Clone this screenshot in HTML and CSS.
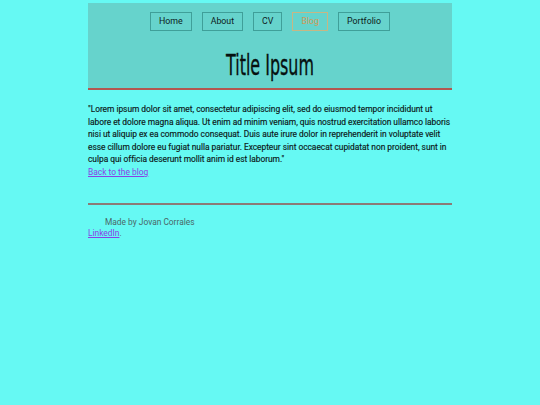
FILE: index.html
```html
<!DOCTYPE html>
<html>
<head>
<meta charset="utf-8">
<link rel="stylesheet" href="styles.css">
</head>
<body>
<div class="page">
  <header class="header">
    <nav class="nav">
      <a class="btn" href="#">Home</a>
      <a class="btn" href="#">About</a>
      <a class="btn" href="#">CV</a>
      <a class="btn active" href="#">Blog</a>
      <a class="btn" href="#">Portfolio</a>
    </nav>
    <h1 class="title">Title Ipsum</h1>
  </header>
  <main class="content">
    <p class="text">"Lorem ipsum dolor sit amet, consectetur adipiscing elit, sed do eiusmod tempor incididunt ut labore et dolore magna aliqua. Ut enim ad minim veniam, quis nostrud exercitation ullamco laboris nisi ut aliquip ex ea commodo consequat. Duis aute irure dolor in reprehenderit in voluptate velit esse cillum dolore eu fugiat nulla pariatur. Excepteur sint occaecat cupidatat non proident, sunt in culpa qui officia deserunt mollit anim id est laborum."</p>
    <a class="link" href="#">Back to the blog</a>
  </main>
  <footer class="footer">
    <p class="made">Made by Jovan Corrales</p>
    <p class="social"><a class="link" href="#">LinkedIn</a>.</p>
  </footer>
</div>
</body>
</html>
```
FILE: styles.css
```css
html, body {
  margin: 0;
  padding: 0;
  background: #66f9f3;
}
body {
  font-family: Roboto, "Noto Sans", sans-serif;
  color: #0d1a1a;
}
.page {
  width: 364px;
  margin: 3px auto 0;
}
.header {
  background: #66d3cc;
  border-bottom: 2px solid #b3564f;
  padding-top: 9px;
  height: 76px;
  box-sizing: content-box;
}
.nav {
  display: flex;
  justify-content: center;
  gap: 10px;
}
.btn {
  display: block;
  height: 17px;
  line-height: 17px;
  padding: 0 8px;
  border: 1px solid #3f9f99;
  font-size: 8.8px;
  color: #0d1a1a;
  text-decoration: none;
}
.btn.active {
  color: #d19a5a;
  border-color: #c7b784;
}
.title {
  margin: 18px 0 0;
  text-align: center;
  font-family: "DejaVu Sans Condensed", "DejaVu Sans", sans-serif;
  font-weight: normal;
  font-size: 29px;
  line-height: 32px;
  color: #061010;
  transform: scaleX(0.61);
  -webkit-text-stroke: 0.35px #061010;
}
.content {
  padding-top: 13px;
  font-size: 8.42px;
  line-height: 12.6px;
}
.text {
  margin: 0;
  letter-spacing: -0.04px;
  -webkit-text-stroke: 0.15px #0d1a1a;
}
.link {
  color: #8a3fe6;
  text-decoration: underline;
}
.footer {
  margin-top: 24px;
  border-top: 2px solid #8c7a76;
  padding-top: 12px;
  font-size: 8.4px;
  line-height: 11px;
  color: #4a6767;
}
.made {
  margin: 0 0 0 17px;
}
.social {
  margin: 0;
}
```
